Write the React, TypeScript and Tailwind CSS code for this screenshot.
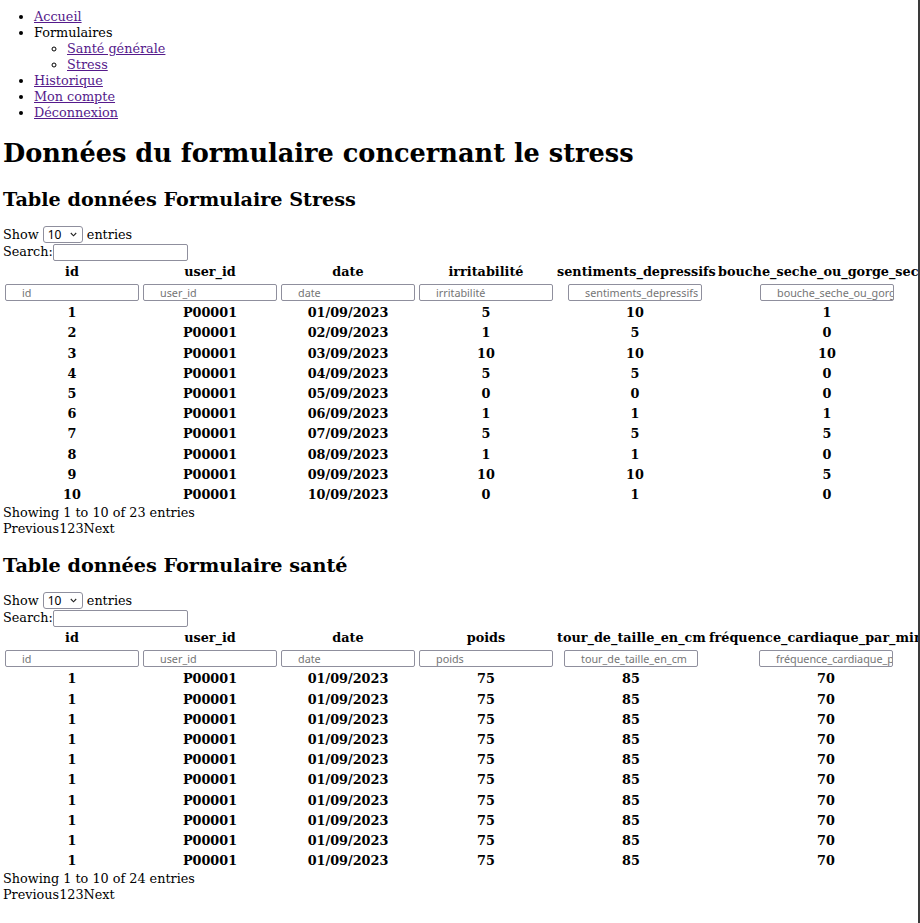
import React from 'react';

const STRESS_COLS = ['id', 'user_id', 'date', 'irritabilité', 'sentiments_depressifs', 'bouche_seche_ou_gorge_seche'];
const STRESS_ROWS = [
  ['1', 'P00001', '01/09/2023', '5', '10', '1'],
  ['2', 'P00001', '02/09/2023', '1', '5', '0'],
  ['3', 'P00001', '03/09/2023', '10', '10', '10'],
  ['4', 'P00001', '04/09/2023', '5', '5', '0'],
  ['5', 'P00001', '05/09/2023', '0', '0', '0'],
  ['6', 'P00001', '06/09/2023', '1', '1', '1'],
  ['7', 'P00001', '07/09/2023', '5', '5', '5'],
  ['8', 'P00001', '08/09/2023', '1', '1', '0'],
  ['9', 'P00001', '09/09/2023', '10', '10', '5'],
  ['10', 'P00001', '10/09/2023', '0', '1', '0'],
];

const SANTE_COLS = ['id', 'user_id', 'date', 'poids', 'tour_de_taille_en_cm', 'fréquence_cardiaque_par_minute'];
const SANTE_ROWS = Array.from({ length: 10 }, () => ['1', 'P00001', '01/09/2023', '75', '85', '70']);

const STRESS_WIDTHS = ['w-[136px]', 'w-[136px]', 'w-[136px]', 'w-[136px]', 'w-[158px]', 'w-[222px]'];
const SANTE_WIDTHS = ['w-[136px]', 'w-[136px]', 'w-[136px]', 'w-[136px]', 'w-[150px]', 'w-[236px]'];

function LengthMenu() {
  return (
    <div className="flex items-center h-[17px] leading-[16px]">
      <span>Show&nbsp;</span>
      <span className="inline-flex items-center justify-between w-[40px] h-[17px] border border-[#8f8f9d] rounded-[3px] pl-[4px] pr-[5px] font-['Noto_Sans',sans-serif] text-[12px] text-black">
        <span>10</span>
        <svg width="7" height="5" viewBox="0 0 7 5" fill="none">
          <path d="M0.8 1 L3.5 3.8 L6.2 1" stroke="#222" strokeWidth="1.1" />
        </svg>
      </span>
      <span>&nbsp;entries</span>
    </div>
  );
}

function SearchBox() {
  return (
    <div className="flex items-center h-[18px] leading-[16px]">
      <span>Search:</span>
      <span className="block w-[135px] h-[17px] border border-[#8f8f9d] rounded-[2px]" />
    </div>
  );
}

function DataTable({ cols, rows, widths, tableWidth, total }: { cols: string[]; rows: string[][]; widths: string[]; tableWidth: string; total: number }) {
  return (
    <div>
      <LengthMenu />
      <SearchBox />
      <table className={`table-fixed border-separate border-spacing-[2px] -ml-[1px] ${tableWidth}`}>
        <thead>
          <tr>
            {cols.map((c, i) => (
              <th key={c} className={`${widths[i]} p-[1px] text-center font-bold leading-[16.2px] whitespace-nowrap`}>
                {c}
              </th>
            ))}
          </tr>
          <tr>
            {cols.map((c) => (
              <th key={c} className="p-[1px]">
                <span className="flex items-center mx-auto w-[134px] h-[17px] border border-[#8f8f9d] rounded-[2px] pl-[16px] pr-[3px] overflow-hidden whitespace-nowrap font-['Noto_Sans',sans-serif] text-[10.8px] font-normal text-[#757575]">
                  {c}
                </span>
              </th>
            ))}
          </tr>
        </thead>
        <tbody>
          {rows.map((r, ri) => (
            <tr key={ri}>
              {r.map((v, ci) => (
                <td key={ci} className="p-[1px] text-center font-bold leading-[16.2px]">
                  {v}
                </td>
              ))}
            </tr>
          ))}
        </tbody>
      </table>
      <div className="-mt-[1px] leading-[16px]">Showing 1 to 10 of {total} entries</div>
      <div className="leading-[16px]">Previous123Next</div>
    </div>
  );
}

export default function App() {
  return (
    <div className="w-[920px] min-h-[923px] border-r-2 border-[#3a3a3a] bg-white overflow-hidden font-['DejaVu_Serif',serif] text-[12.8px] text-black">
      <div className="pl-[3px] pt-[9px]">
        <ul className="list-disc pl-[31px] leading-[16px]">
          <li><a href="#" className="text-[#551a8b] underline">Accueil</a></li>
          <li>
            Formulaires
            <ul className="list-[circle] pl-[33px]">
              <li><a href="#" className="text-[#551a8b] underline">Santé générale</a></li>
              <li><a href="#" className="text-[#551a8b] underline">Stress</a></li>
            </ul>
          </li>
          <li><a href="#" className="text-[#551a8b] underline">Historique</a></li>
          <li><a href="#" className="text-[#551a8b] underline">Mon compte</a></li>
          <li><a href="#" className="text-[#551a8b] underline">Déconnexion</a></li>
        </ul>

        <h1 className="mt-[16px] text-[25.6px] leading-[33px] font-bold">Données du formulaire concernant le stress</h1>

        <h2 className="mt-[18px] mb-[14px] text-[19.2px] leading-[24px] font-bold">Table données Formulaire Stress</h2>
        <DataTable cols={STRESS_COLS} rows={STRESS_ROWS} widths={STRESS_WIDTHS} tableWidth="w-[938px]" total={23} />

        <h2 className="mt-[17px] mb-[14px] text-[19.2px] leading-[24px] font-bold">Table données Formulaire santé</h2>
        <DataTable cols={SANTE_COLS} rows={SANTE_ROWS} widths={SANTE_WIDTHS} tableWidth="w-[944px]" total={24} />
      </div>
    </div>
  );
}
